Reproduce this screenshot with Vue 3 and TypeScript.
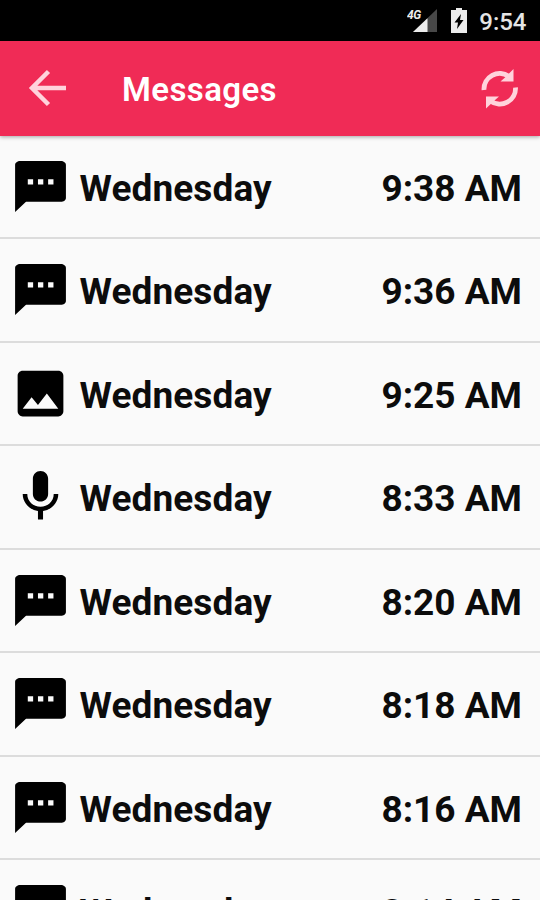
<script setup lang="ts">
type Kind = 'text' | 'image' | 'audio'

interface Message {
  kind: Kind
  day: string
  time: string
}

const icons: Record<Kind, string> = {
  text: 'M20 2H4c-1.1 0-1.99.7-1.99 1.5L2 22l4.3-4H20c1.1 0 2-.6 2-1.5v-13C22 2.7 21.1 2 20 2zM9.1 11.2H7V9.1h2.1v2.1zm4 0H11V9.1h2.1v2.1zm4 0H15V9.1h2.1v2.1z',
  image: 'M21 19V5c0-1.1-.9-2-2-2H5c-1.1 0-2 .9-2 2v14c0 1.1.9 2 2 2h14c1.1 0 2-.9 2-2zM8.5 13.5l2.5 3.01L14.5 12l4.5 6H5l3.5-4.5z',
  audio: 'M12 14c1.66 0 3-1.34 3-3V5c0-1.66-1.34-3-3-3S9 3.34 9 5v6c0 1.66 1.34 3 3 3zm5.2-3c0 3-2.4 5-5.2 5s-5.200-2-5.200-5H5c0 3.400 2.620 6.200 6 6.700V21h2v-3.300c3.380-.5 6-3.300 6-6.700h-1.800z',
}

const messages: Message[] = [
  { kind: 'text', day: 'Wednesday', time: '9:38 AM' },
  { kind: 'text', day: 'Wednesday', time: '9:36 AM' },
  { kind: 'image', day: 'Wednesday', time: '9:25 AM' },
  { kind: 'audio', day: 'Wednesday', time: '8:33 AM' },
  { kind: 'text', day: 'Wednesday', time: '8:20 AM' },
  { kind: 'text', day: 'Wednesday', time: '8:18 AM' },
  { kind: 'text', day: 'Wednesday', time: '8:16 AM' },
  { kind: 'text', day: 'Wednesday', time: '8:14 AM' },
]
</script>

<template>
  <div class="screen">
    <div class="status">
      <svg class="signal" width="32" height="26" viewBox="0 0 32 26">
        <path d="M30 1V24H6z" fill="#484848" />
        <path d="M20.500 10.200V24H6z" fill="#ececec" />
        <text class="network" x="0" y="10.500">4G</text>
      </svg>
      <svg class="battery" width="18" height="26" viewBox="0 0 18 26">
        <path d="M6 0h6v2h5v23H1V2h5z" fill="#ececec" />
        <path d="M11 6L4.500 14.500H8L7 21l6.500-9H10z" fill="#000" />
      </svg>
      <span class="clock">9:54</span>
    </div>
    <header class="bar">
      <svg class="back" width="40" height="40" viewBox="0 0 40 40">
        <path d="M21.500 3.500L5 20l16.500 16.500M5 20H39" />
      </svg>
      <h1 class="title">Messages</h1>
      <svg class="refresh" width="40" height="42" viewBox="0 0 40 42">
        <path class="arc" d="M4 22A15.700 15.700 0 0 1 29 8.500M35.500 19.500A15.700 15.700 0 0 1 10.500 33" />
        <path class="head" d="M33.500 1V13.500H20.500L25 9.500zM6 40.500V28.500H19L14.500 32.500z" />
      </svg>
    </header>
    <ul class="list">
      <li v-for="(message, index) in messages" :key="index" class="row">
        <svg class="icon" width="61" height="61" viewBox="0 0 24 24">
          <path :d="icons[message.kind]" />
        </svg>
        <span class="day">{{ message.day }}</span>
        <span class="time">{{ message.time }}</span>
      </li>
    </ul>
  </div>
</template>

<style>
body {
  margin: 0;
  overflow: hidden;
}
</style>

<style scoped>
.screen {
  width: 540px;
  height: 900px;
  overflow: hidden;
  display: flex;
  flex-direction: column;
  background: #fafafa;
  font-family: Roboto, 'Liberation Sans', sans-serif;
}
.status {
  flex: none;
  height: 41px;
  box-sizing: border-box;
  padding: 0 13.5px 0 0;
  display: flex;
  justify-content: flex-end;
  align-items: center;
  background: #000;
}
.network {
  font-size: 12px;
  font-weight: 700;
  font-style: italic;
  letter-spacing: -0.5px;
  fill: #ececec;
}
.battery {
  margin-left: 11.5px;
}
.clock {
  margin-left: 11px;
  padding-top: 2px;
  font-size: 24px;
  font-weight: 500;
  color: #e4e4e4;
}
.bar {
  flex: none;
  height: 94.5px;
  box-sizing: border-box;
  padding: 0 20px 0 27px;
  display: flex;
  align-items: center;
  background: #f02b56;
  box-shadow: 0 1px 4px rgba(0, 0, 0, 0.35);
  position: relative;
}
.back path {
  fill: none;
  stroke: #ffd3dc;
  stroke-width: 4.5;
}
.title {
  margin: 3px 0 0 55px;
  font-size: 33px;
  line-height: 40px;
  font-weight: 600;
  letter-spacing: 0.4px;
  color: #fff;
}
.refresh {
  margin: 2px 0 0 auto;
}
.arc {
  fill: none;
  stroke: #ffd3dc;
  stroke-width: 4.8;
}
.head {
  fill: #ffd3dc;
}
.list {
  margin: 0;
  padding: 0;
  list-style: none;
}
.row {
  height: 103.5px;
  box-sizing: border-box;
  padding: 0 18px 0 9.5px;
  display: flex;
  align-items: center;
  border-bottom: 2px solid #dcdcdc;
}
.icon {
  flex: none;
}
.day {
  margin: 4px 0 0 9px;
  font-size: 37px;
  font-weight: 700;
  letter-spacing: 0.1px;
  color: #0c0c0c;
}
.time {
  margin: 4px 0 0 auto;
  font-size: 37px;
  font-weight: 700;
  color: #0c0c0c;
}
</style>
